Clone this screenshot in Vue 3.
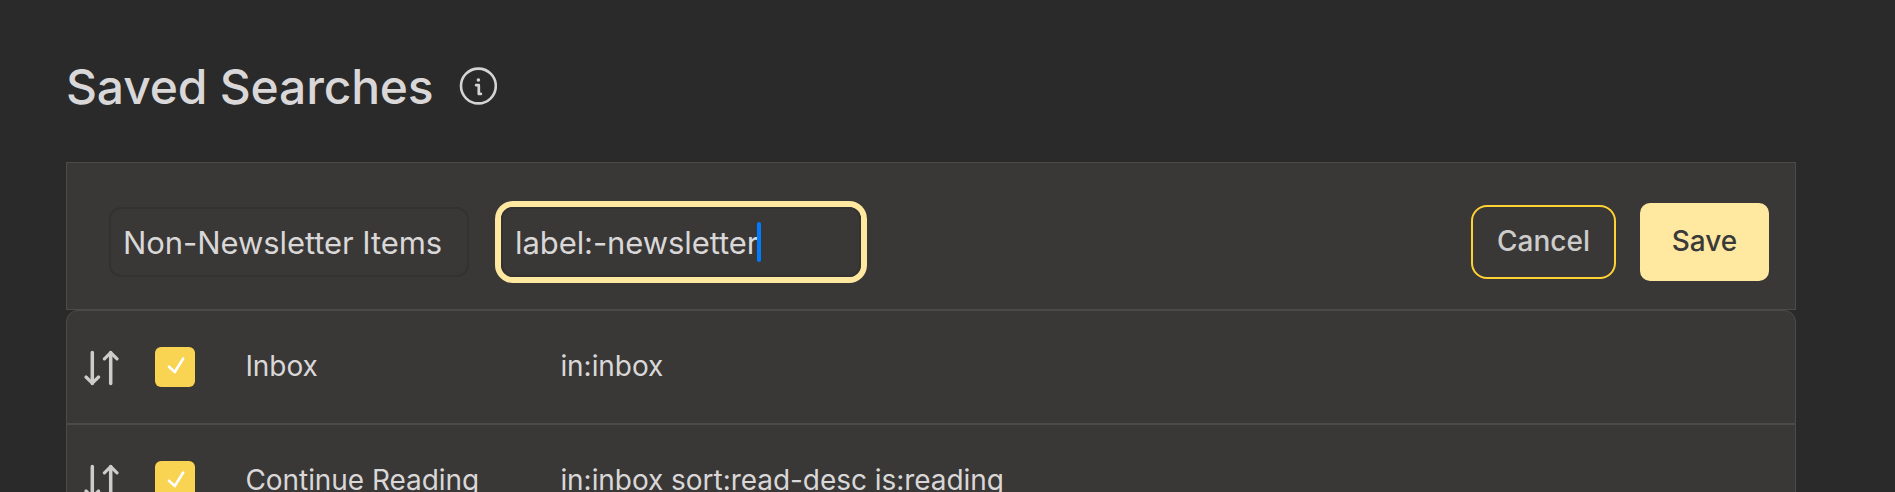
<script setup>
const rows = [
  { name: 'Inbox', query: 'in:inbox' },
  { name: 'Continue Reading', query: 'in:inbox sort:read-desc is:reading' },
]
</script>

<template>
  <main class="page">
    <header class="header">
      <h1 class="title">Saved Searches</h1>
      <svg class="info" width="38" height="38" viewBox="0 0 38 38" fill="none">
        <circle cx="19.4" cy="19" r="17.4" stroke="currentColor" stroke-width="2.6" />
        <circle cx="19.4" cy="13" r="1.8" fill="currentColor" />
        <path d="M17.1 18.2H19.8V26.9H21.9" stroke="currentColor" stroke-width="2.7" stroke-linecap="round" stroke-linejoin="round" />
      </svg>
    </header>

    <section class="editor">
      <div class="field"><span class="name-text">Non-Newsletter Items</span></div>
      <div class="field focused"><span class="query-text">label:-newsletter</span><i class="caret"></i></div>
      <div class="actions">
        <button class="btn cancel">Cancel</button>
        <button class="btn save">Save</button>
      </div>
    </section>

    <section class="list">
      <div v-for="row in rows" :key="row.name" class="row">
        <svg class="sort" width="36" height="36" viewBox="0 0 36 36" fill="none" stroke="currentColor" stroke-linecap="round" stroke-linejoin="round">
          <path d="M8.3 2.5V33.5M26.7 33.5V2.5" stroke-width="3.5" />
          <path d="M2 27L8.3 33.2L14.6 27M20.4 8.8L26.7 2.6L33 8.8" stroke-width="3.2" />
        </svg>
        <span class="check">
          <svg width="40" height="40" viewBox="0 0 40 40" fill="none" stroke="#fff" stroke-width="2.6" stroke-linecap="round" stroke-linejoin="round">
            <path d="M14 19.7L19.8 25L28.2 11.5" />
          </svg>
        </span>
        <span class="name">{{ row.name }}</span>
        <span class="query">{{ row.query }}</span>
      </div>
    </section>
  </main>
</template>

<style>
body {
  background: #2a2a2a;
}
</style>

<style scoped>
.page {
  box-sizing: border-box;
  height: 492px;
  padding: 56px 99px 0 66px;
  overflow: hidden;
  background: #2a2a2a;
  color: #d9d7d8;
  font-family: Inter, "Liberation Sans", sans-serif;
}
.header {
  display: flex;
  align-items: flex-start;
  height: 106px;
}
.title {
  width: 393px;
  margin: 0;
  font-size: 48px;
  font-weight: 500;
  line-height: 62px;
  letter-spacing: -0.18px;
  white-space: nowrap;
}
.info {
  margin-top: 11px;
  color: #d5d4d4;
}
.editor {
  box-sizing: border-box;
  display: flex;
  align-items: center;
  gap: 32px;
  height: 148px;
  padding: 12px 26px 0 42px;
  border: 1px solid #4d4b49;
  background: #3a3836;
}
.field {
  box-sizing: border-box;
  display: flex;
  align-items: center;
  width: 360px;
  height: 70px;
  padding-left: 12px;
  border: 2px solid #343231;
  border-radius: 12px;
  font-size: 31px;
  letter-spacing: -0.08px;
  white-space: nowrap;
}
.focused {
  box-shadow: 0 0 0 6px #ffe9a0;
}
.caret {
  width: 4px;
  height: 40px;
  margin-left: -1.5px;
  border-radius: 2px;
  background: #007aff;
}
.actions {
  display: flex;
  align-items: center;
  gap: 24px;
  margin-left: auto;
}
.btn {
  box-sizing: border-box;
  padding: 0 0 2px;
  font-family: inherit;
  font-size: 28px;
  font-weight: 500;
}
.cancel {
  width: 145px;
  height: 74px;
  border: 2px solid #ffd234;
  border-radius: 16px;
  background: transparent;
  color: #cdcccc;
}
.save {
  width: 129px;
  height: 78px;
  border: 0;
  border-radius: 10px;
  background: #ffe9a0;
  color: #3a3a3a;
}
.row {
  box-sizing: border-box;
  display: flex;
  align-items: center;
  height: 114px;
  padding-left: 17px;
  border: 1px solid #4d4b49;
  background: #3a3836;
  font-size: 28px;
  letter-spacing: -0.05px;
  white-space: nowrap;
}
.row:first-child {
  border-radius: 12px 12px 0 0;
}
.sort {
  width: 36px;
  margin-top: 2px;
  color: #cdcccc;
}
.check {
  width: 40px;
  height: 40px;
  margin: 0 50.4px 0 35px;
  border-radius: 6px;
  background: #f9d352;
}
.check svg {
  display: block;
}
.name {
  width: 315px;
}
.name,
.query {
  margin-bottom: 2px;
}
</style>
